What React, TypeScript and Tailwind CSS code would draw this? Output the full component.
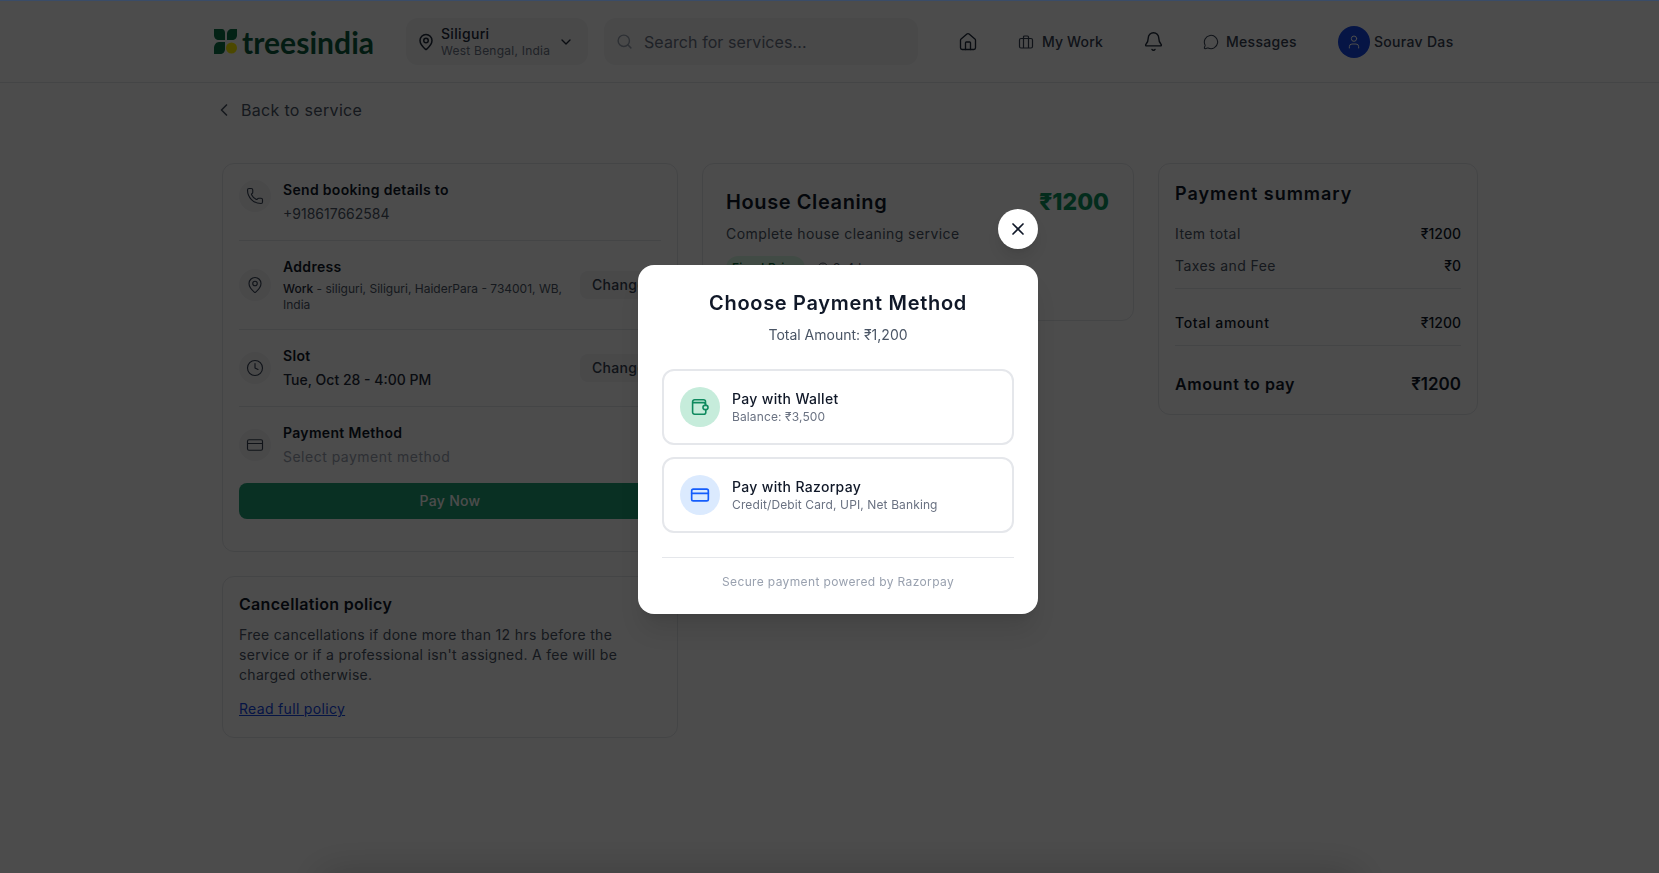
import {
  MapPin,
  ChevronDown,
  ChevronLeft,
  Search,
  House,
  Bell,
  MessageCircle,
  User,
  Phone,
  Clock,
  CreditCard,
  X,
} from "lucide-react";
import type { ReactNode } from "react";

function Logo() {
  return (
    <div className="flex w-[160px] items-center">
      <svg width="25" height="27" viewBox="0 0 25 27" className="shrink-0">
        <path d="M1 1h8c2 0 3 2 3 4v7H6C3 12 1 10 1 7z" fill="#0a7248" />
        <path d="M24 1v6c0 3-2 5-5 5h-5V6c0-3 2-5 5-5z" fill="#0a7248" />
        <path d="M12 14v7c0 3-2 5-5 5H1v-6c0-3 2-6 5-6z" fill="#0a7248" />
        <circle cx="18.5" cy="20" r="5.5" fill="#fff200" />
      </svg>
      <span className="ml-[4px] text-[30px] leading-none font-bold tracking-[0.002em] text-[#0a5c3c] [font-family:Lato,sans-serif]">
        treesindia
      </span>
    </div>
  );
}

function WorkIcon() {
  return (
    <svg width="16" height="16" viewBox="0 0 16 16" fill="none" stroke="currentColor" strokeWidth="1.2">
      <rect x="1.5" y="4.5" width="13" height="9.5" rx="1.5" />
      <path d="M5.5 4.5V3a1 1 0 0 1 1-1h3a1 1 0 0 1 1 1v1.5M5.5 4.5V14M10.5 4.5V14" />
    </svg>
  );
}

function WalletIcon() {
  return (
    <svg width="20" height="20" viewBox="0 0 20 20" fill="none" stroke="currentColor" strokeWidth="1.6">
      <path d="M15.5 8V4.8a2 2 0 0 0-2-2H4.6a2 2 0 0 0-2 2v10.4a2 2 0 0 0 2 2h9.2a2 2 0 0 0 2-2V13" />
      <path d="M2.6 5.6h11a2 2 0 0 1 1.9 2.4" />
      <rect x="13" y="8.4" width="5" height="4.2" rx="2" />
    </svg>
  );
}

function rowClass(last?: boolean, top?: boolean) {
  if (last) return "flex items-center gap-3 pt-4";
  if (top) return "flex items-start gap-3 border-b border-gray-200 pb-4";
  return "flex items-center gap-3 border-b border-gray-200 py-4";
}

function Row({
  icon,
  title,
  children,
  action,
  last,
  top,
}: {
  icon: ReactNode;
  title: string;
  children: ReactNode;
  action?: boolean;
  last?: boolean;
  top?: boolean;
}) {
  return (
    <div className={rowClass(last, top)}>
      <div className="flex h-8 w-8 shrink-0 items-center justify-center rounded-full bg-gray-100 text-gray-700">{icon}</div>
      <div className="min-w-0 flex-1">
        <div className="text-sm leading-5 font-semibold text-gray-900">{title}</div>
        {children}
      </div>
      {action && (
        <button className="h-7 w-[81px] shrink-0 rounded-lg bg-gray-100 px-3 text-left text-sm font-medium text-gray-700">
          Change
        </button>
      )}
    </div>
  );
}

function SummaryLine({ label, value }: { label: string; value: string }) {
  return (
    <div className="flex items-center justify-between text-sm leading-5">
      <span className="tracking-[0.03em] text-gray-600">{label}</span>
      <span className="font-medium tracking-normal text-gray-900">{value}</span>
    </div>
  );
}

function PayOption({
  icon,
  circle,
  title,
  sub,
}: {
  icon: ReactNode;
  circle: string;
  title: string;
  sub: string;
}) {
  return (
    <button className="flex w-full items-center gap-3 rounded-xl border-2 border-gray-200 bg-white p-4 text-left">
      <div className={`flex h-10 w-10 items-center justify-center rounded-full ${circle}`}>{icon}</div>
      <div>
        <div className="text-sm leading-[18px] font-medium text-gray-900">{title}</div>
        <div className="mt-px text-xs leading-4 tracking-[0.01em] text-gray-500">{sub}</div>
      </div>
    </button>
  );
}

export default function App() {
  return (
    <div className="relative h-[873px] w-full overflow-hidden bg-white text-gray-900 [font-family:Inter,sans-serif] tracking-[0.02em]">
      {/* Header */}
      <header className="flex h-[83px] items-center border-b border-gray-200 pt-px pl-[213px]">
        <Logo />
        <div className="ml-[33px] flex h-[47px] w-[182px] items-center rounded-xl bg-gray-100 pr-[14px] pl-[11px]">
          <MapPin size={18} className="shrink-0 text-gray-800" />
          <div className="ml-[6px] flex-1 whitespace-nowrap">
            <div className="text-sm leading-[18px] font-medium text-gray-800">Siliguri</div>
            <div className="text-xs leading-[16px] tracking-[0.02em] text-gray-500">West Bengal, India</div>
          </div>
          <ChevronDown size={16} className="text-gray-800" />
        </div>
        <div className="ml-4 flex h-[47px] w-[314px] items-center rounded-xl bg-gray-100 pl-3">
          <Search size={17} className="text-gray-400" />
          <span className="ml-[11px] text-base tracking-[0.005em] text-gray-500">Search for services...</span>
        </div>
        <House size={20} strokeWidth={1.6} className="ml-[40px] text-gray-800" />
        <div className="ml-[40px] flex items-center gap-2 text-sm font-medium tracking-[0.01em] text-gray-700">
          <WorkIcon />
          My Work
        </div>
        <Bell size={21} strokeWidth={1.6} className="ml-[40px] text-gray-800" />
        <div className="ml-[39px] flex items-center gap-[7px] text-sm font-medium text-gray-700">
          <MessageCircle size={16} strokeWidth={1.6} />
          Messages
        </div>
        <div className="ml-[41px] flex h-8 w-8 items-center justify-center rounded-full bg-blue-700 text-white">
          <User size={16} strokeWidth={1.5} />
        </div>
        <span className="ml-[4px] text-sm font-medium text-gray-700">Sourav Das</span>
      </header>

      <main className="pt-[15px] pl-[222px]">
        <div className="-ml-2 flex items-center gap-[7px] text-base leading-6 text-gray-600">
          <ChevronLeft size={20} />
          Back to service
        </div>

        <div className="mt-[41px] grid grid-cols-[456px_432px_320px] items-start gap-x-6">
          {/* Left column */}
          <div className="flex flex-col gap-6">
            <section className="rounded-xl border border-gray-200 p-4 pb-[32px]">
              <Row icon={<Phone size={18} strokeWidth={1.5} />} title="Send booking details to" top>
                <div className="mt-1 text-sm leading-5 tracking-normal text-gray-600">+918617662584</div>
              </Row>
              <Row icon={<MapPin size={18} strokeWidth={1.5} />} title="Address" action>
                <div className="mt-1 text-xs leading-4 tracking-normal text-gray-600">
                  <span className="font-medium text-gray-800">Work</span> - siliguri, Siliguri, HaiderPara - 734001, WB, India
                </div>
              </Row>
              <Row icon={<Clock size={18} strokeWidth={1.5} />} title="Slot" action>
                <div className="mt-1 text-sm leading-5 font-medium tracking-normal text-gray-800">Tue, Oct 28 - 4:00 PM</div>
              </Row>
              <Row icon={<CreditCard size={18} strokeWidth={1.5} />} title="Payment Method" last>
                <div className="mt-1 text-sm leading-5 tracking-[0.035em] text-gray-400">Select payment method</div>
              </Row>
              <button className="mt-4 h-9 w-full rounded-lg bg-[#21a075] text-sm font-medium text-white">Pay Now</button>
            </section>

            <section className="rounded-xl border border-gray-200 p-4 pb-[18px]">
              <h3 className="text-base leading-[22px] font-semibold text-gray-900">Cancellation policy</h3>
              <p className="mt-[10px] text-sm leading-5 text-gray-600">
                Free cancellations if done more than 12 hrs before the service or if a professional isn't assigned. A fee
                will be charged otherwise.
              </p>
              <a className="mt-3.5 block text-sm leading-5 text-blue-700 underline">Read full policy</a>
            </section>
          </div>

          {/* Service */}
          <section className="rounded-xl border border-gray-200 pt-6 pr-[24px] pb-10 pl-[23px]">
            <div className="flex items-center justify-between">
              <h2 className="text-xl leading-7 font-semibold tracking-[0.03em] text-gray-900">House Cleaning</h2>
              <span className="text-[23px] leading-7 font-extrabold tracking-normal text-[#0a9560]">₹1200</span>
            </div>
            <p className="mt-2 text-sm leading-5 tracking-[0.03em] text-gray-600">Complete house cleaning service</p>
            <div className="mt-3 flex items-center gap-3">
              <span className="flex h-6 w-[79px] items-center justify-center rounded-full bg-green-100 text-xs font-medium text-green-800">
                Fixed Price
              </span>
              <span className="flex items-center gap-1 text-xs text-gray-600">
                <Clock size={12} />
                2-4 hrs
              </span>
            </div>
          </section>

          {/* Payment summary */}
          <section className="rounded-xl border border-gray-200 p-4">
            <h3 className="text-lg leading-7 font-semibold tracking-[0.055em] text-gray-900">Payment summary</h3>
            <div className="mt-4 flex flex-col gap-3 border-b border-gray-200 pb-3">
              <SummaryLine label="Item total" value="₹1200" />
              <SummaryLine label="Taxes and Fee" value="₹0" />
            </div>
            <div className="flex items-center justify-between border-b border-gray-200 pt-6 pb-3 text-sm leading-5 font-medium">
              <span className="tracking-[0.045em] text-gray-900">Total amount</span>
              <span className="tracking-normal text-gray-900">₹1200</span>
            </div>
            <div className="flex items-center justify-between pt-6 text-base leading-7 font-semibold">
              <span className="tracking-[0.035em]">Amount to pay</span>
              <span className="text-[17px] tracking-normal">₹1200</span>
            </div>
          </section>
        </div>
      </main>

      {/* soft shadow of a bar hidden under the fold */}
      <div className="absolute right-[300px] bottom-[-40px] left-[320px] h-10 shadow-[0_0_40px_rgba(0,0,0,0.2)]" />

      {/* Overlay and dialog */}
      <div className="absolute inset-0 bg-black/70 backdrop-blur-[0.5px]" />
      <div className="absolute inset-x-0 top-0 h-px bg-[#3a4c68]" />
      <div className="absolute inset-0 flex justify-center pt-[209px] pl-[17px]">
        <div className="w-[400px]">
          <div className="mb-4 flex justify-end">
            <button className="flex h-10 w-10 items-center justify-center rounded-full bg-white text-gray-900 shadow-lg">
              <X size={20} />
            </button>
          </div>
          <div className="rounded-2xl bg-white p-6 shadow-xl">
            <h2 className="text-center text-xl leading-7 font-semibold tracking-[0.035em] text-gray-900">Choose Payment Method</h2>
            <p className="mt-2 text-center text-sm leading-5 tracking-normal text-gray-600">Total Amount: ₹1,200</p>
            <div className="mt-6 flex flex-col gap-3">
              <PayOption
                icon={<span className="text-[#0f8a5f]"><WalletIcon /></span>}
                circle="bg-[#c6ecdb]"
                title="Pay with Wallet"
                sub="Balance: ₹3,500"
              />
              <PayOption
                icon={<CreditCard size={20} strokeWidth={2} className="text-blue-600" />}
                circle="bg-blue-100"
                title="Pay with Razorpay"
                sub="Credit/Debit Card, UPI, Net Banking"
              />
            </div>
            <div className="mt-6 border-t border-gray-200 pt-4 text-center text-xs leading-4 tracking-[0.03em] text-gray-400">
              Secure payment powered by Razorpay
            </div>
          </div>
        </div>
      </div>
    </div>
  );
}
